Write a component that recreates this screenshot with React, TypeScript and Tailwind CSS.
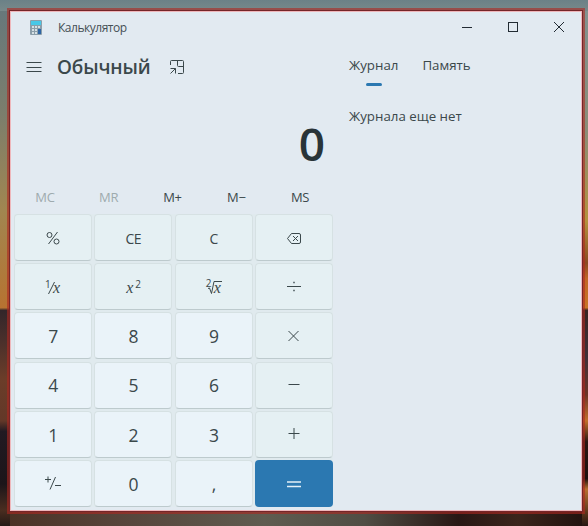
import React from "react";

const Svg = ({ size = 16, sw = 1, children }: { size?: number; sw?: number; children: React.ReactNode }) => (
  <svg width={size} height={size} viewBox={`0 0 ${size} ${size}`} fill="none" stroke="currentColor" strokeWidth={sw}>
    {children}
  </svg>
);

const X = ({ className = "" }: { className?: string }) => (
  <span className={`font-['Liberation_Serif',serif] text-[16px] leading-none italic ${className}`}>x</span>
);

const Reciprocal = () => (
  <span className="relative block h-4 w-4">
    <span className="absolute -top-[1px] left-0 text-[10px] leading-[10px]">1</span>
    <Svg><path d="M9.5 2 3.5 14" /></Svg>
    <X className="absolute top-0 left-[8px]" />
  </span>
);

const Square = () => (
  <span className="relative block h-4 w-4">
    <X className="absolute top-0 left-[1px]" />
    <span className="absolute -top-[1px] left-[10px] text-[10px] leading-[10px]">2</span>
  </span>
);

const Root = () => (
  <span className="relative block h-4 w-4">
    <span className="absolute -top-[2px] left-0 text-[10px] leading-[10px]">2</span>
    <Svg><path d="M2 8.5 3.5 8 5.5 13.5 8 1.5H16.5" /></Svg>
    <X className="absolute top-0 left-[8px]" />
  </span>
);

const Backspace = () => (
  <Svg><path d="M5.5 2.5H13a1.5 1.5 0 0 1 1.5 1.5v7a1.5 1.5 0 0 1-1.5 1.5H5.500L1.500 7.500z M7 5l5 5M12 5l-5 5" /></Svg>
);
const Divide = () => (
  <Svg><path d="M1 6.500H15" /><path d="M7.300 2.500h1.400M7.300 10.500h1.400" strokeWidth={1.500} /></Svg>
);
const Times = () => <Svg><path d="m2.500 2 10 10M12.500 2l-10 10" /></Svg>;
const Minus = () => <Svg><path d="M2.500 5.500h11" /></Svg>;
const Plus = () => <Svg><path d="M2.500 5.500h11M8 0v11" /></Svg>;
const Equals = () => <Svg sw={1.3}><path d="M1 5h14M1 9.500h14" /></Svg>;
const Negate = () => (
  <Svg><path d="M0 3.500h6M3 .5v6M10.500 1 5 13.500M10 9.500h6" /></Svg>
);

type Key = { label: React.ReactNode; kind: "op" | "num" | "eq" };
const op = (label: React.ReactNode): Key => ({ label, kind: "op" });
const num = (label: React.ReactNode): Key => ({ label, kind: "num" });

const keys: Key[] = [
  op(<Svg><circle cx="4.500" cy="4" r="2.500" /><circle cx="11.500" cy="10.500" r="2.500" /><path d="M12.500 1 3.500 13" /></Svg>),
  op("CE"), op("C"), op(<Backspace />),
  op(<Reciprocal />), op(<Square />), op(<Root />), op(<Divide />),
  num("7"), num("8"), num("9"), op(<Times />),
  num("4"), num("5"), num("6"), op(<Minus />),
  num("1"), num("2"), num("3"), op(<Plus />),
  num(<Negate />), num("0"), num(","), { label: <Equals />, kind: "eq" },
];

const styles = {
  op: "border border-[#d6e1e3] border-b-[#bdcacd] bg-[#e5f0f3] pt-[3px] text-[14px] leading-[18px] tracking-[-.6px] text-[#3b484b]",
  num: "border border-[#d6e1e3] border-b-[#bdcacd] bg-[#eaf3f9] pt-[1px] text-[17.5px] tracking-[-.5px] text-[#3b484b]",
  eq: "bg-[#2b78b1] pt-[3px] text-[#e4f0f8]",
};

export default function App() {
  return (
    <div className="h-[526px] w-[588px] overflow-hidden bg-[linear-gradient(90deg,#4a3124,#56443a_20%,#5f5c50_45%,#504d44_62%,#281714_78%,#3b251c_88%,#20110e)] font-['Open_Sans','Noto_Sans',sans-serif]">
      <div className="flex h-full bg-[linear-gradient(180deg,#6b8187,#78898a),linear-gradient(180deg,#65777c,#7c7e6c_22%,#a18650_40%,#b77331_58.500%,#33262a_59%,#4b302b_65%,#6b3d29_72%,#633828_80%,#221a22_82%,#1c1519_92%,#4a2d20_97%,#241915),linear-gradient(180deg,#819392,#8b8d78_25%,#b4933d_42%,#8a4a20_50%,#c16723_53%,#c87526_58.500%,#382322_59%,#3f3038_68%,#6b3426_75%,#c0702b_80%,#2b1712_84%,#1c0f0d_91%,#b8702f_93%,#261713)] bg-[size:100%_11px,10px_100%,6px_100%] bg-[position:top,left,right] bg-no-repeat pt-[11px] pr-[6px] pb-[15px] pl-[10px]">
        <main className="flex h-[500px] w-[572px] border border-[#efb7bb] bg-[#e2eaf1] shadow-[0_0_0_1px_#752529,0_0_0_3px_rgba(174,38,32,.600)]">
          <section className="flex w-[323px] flex-col">
            <div className="flex h-[31px] items-center pl-[19px]">
              <svg width="12" height="15" viewBox="0 0 12 15">
                <rect width="12" height="15" rx="1" fill="#8b9eaa" />
                <rect x="1" y="1" width="10" height="4" fill="#48c8e8" />
                <path d="M2 6h2v2H2zM5 6h2v2H5zM8 6h2v2H8zM2 9h2v2H2zM5 9h2v2H5zM2 12h2v2H2zM5 12h2v2H5z" fill="#d5e0e5" />
                <path d="M8 9h3v5H8z" fill="#2d65a5" />
              </svg>
              <span className="ml-4 text-[12px] tracking-[-.480px] text-[#454f55]">Калькулятор</span>
            </div>
            <header className="flex h-12 items-center pl-[15px] text-[#3b484b]">
              <Svg><path d="M.500 3.500h15M.500 8.500h15M.500 12.500h15" /></Svg>
              <h1 className="ml-[15px] w-[94px] text-[19px] font-semibold tracking-[-.150px] whitespace-nowrap">Обычный</h1>
              <span className="ml-[18px]">
                <Svg><path d="M1.500 6V2.500a1 1 0 0 1 1-1h11a1 1 0 0 1 1 1v11a1 1 0 0 1-1 1H9M8.500 1.500v5a1 1 0 0 0 1 1h5M1.500 9.500h5v5M6.500 9.500l-5 5" /></Svg>
              </span>
            </header>
            <output className="flex h-[91px] items-center justify-end pt-[12px] pr-[9px] text-[46px] leading-none font-semibold text-[#293438]">0</output>
            <div className="grid h-8 w-[321px] grid-cols-5 items-center pl-[2px] text-center text-[13px] tracking-[-.200px] text-[#3b484b]">
              <span className="text-[#9eabae]">MC</span>
              <span className="text-[#9eabae]">MR</span>
              <span>M+</span><span>M−</span><span>MS</span>
            </div>
            <div className="ml-[3px] grid h-[293px] w-[319px] grid-cols-4 grid-rows-6 gap-[2.400px] bg-[#e0eaee]">
              {keys.map((k, i) => (
                <button key={i} className={`flex items-center justify-center rounded-[4px] ${styles[k.kind]}`}>{k.label}</button>
              ))}
            </div>
          </section>
          <aside className="flex flex-1 flex-col text-[#3b484b]">
            <div className="flex h-[31px] items-center justify-end gap-[30px] pr-[14px] text-[#222b33]">
              <Svg><path d="M3 7.500h10" /></Svg>
              <Svg><rect x="3.500" y="2.500" width="9" height="9" /></Svg>
              <Svg><path d="m3 2 10 10M13 2 3 12" /></Svg>
            </div>
            <nav className="flex gap-6 pt-[11px] pl-[15px] text-[13.300px] leading-[22px]">
              <div className="flex flex-col items-center gap-[7px]">Журнал<i className="h-[3px] w-4 rounded-full bg-[#2b78b1]" /></div>
              <span>Память</span>
            </nav>
            <p className="mt-[19px] pl-[15px] text-[13.300px] leading-[22px]">Журнала еще нет</p>
          </aside>
        </main>
      </div>
    </div>
  );
}
